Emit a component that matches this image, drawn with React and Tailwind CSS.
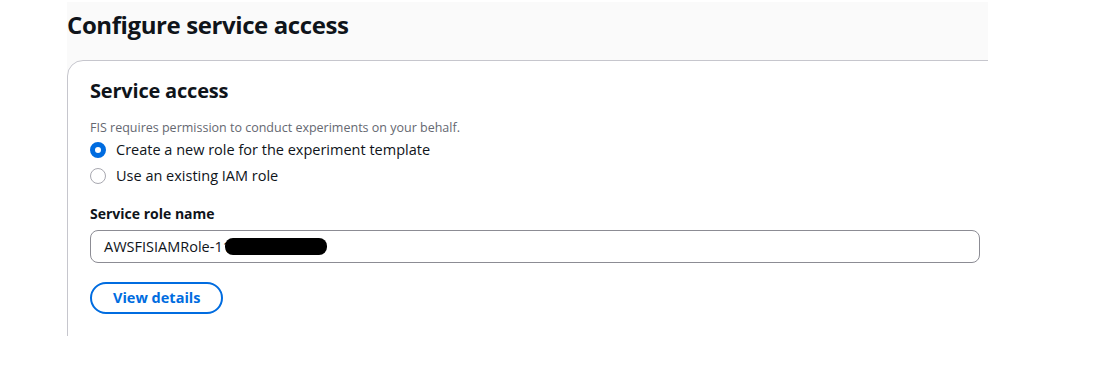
export default function App() {
  return (
    <div className="w-[1105px] h-[370px] bg-white" style={{ fontFamily: '"Open Sans", "Noto Sans", sans-serif' }}>
      <div className="pl-[67px] pt-[2px]">
        <div className="w-[921px] h-[334px] overflow-hidden bg-[#fafafa] flex flex-col">
          <h1 className="h-[58px] shrink-0 pt-[7px] text-[24px] leading-[32px] font-bold text-[#0f141a] tracking-[-0.4px]">
            Configure service access
          </h1>
          <div className="w-[960px] h-[320px] shrink-0 bg-white border border-[#c6c6cd] rounded-[16px] pl-[22px] pt-[16px]">
            <h2 className="text-[20px] leading-[28px] font-bold text-[#0f141a] tracking-[-0.2px]">Service access</h2>
            <p className="mt-[15px] text-[12.5px] leading-[16px] text-[#656871]">
              FIS requires permission to conduct experiments on your behalf.
            </p>
            <div className="mt-[4px] flex flex-col gap-[6px]">
              <label className="flex items-center gap-[10px] h-[20px]">
                <span className="w-[16px] h-[16px] rounded-full border-[5px] border-[#006ce0] bg-white shrink-0" />
                <span className="text-[14.5px] leading-[20px] text-[#0f141a]">Create a new role for the experiment template</span>
              </label>
              <label className="flex items-center gap-[10px] h-[20px]">
                <span className="w-[16px] h-[16px] rounded-full border-[1.5px] border-[#a8a8b0] bg-white shrink-0" />
                <span className="text-[14.5px] leading-[20px] text-[#0f141a]">Use an existing IAM role</span>
              </label>
            </div>
            <div className="mt-[18px] text-[14px] leading-[20px] font-bold text-[#0f141a]">Service role name</div>
            <div className="mt-[6px] w-[890px] h-[33px] border border-[#8c8c94] rounded-[8px] flex items-center pl-[13px] text-[14.5px] text-[#0f141a]">
              <span>AWSFISIAMRole-11</span>
              <span className="ml-[-6px] w-[102px] h-[17px] bg-black rounded-[8px]" />
            </div>
            <button className="mt-[19px] h-[32px] px-[21px] rounded-full border-2 border-[#006ce0] text-[#006ce0] text-[14.5px] font-bold leading-[20px]">
              View details
            </button>
          </div>
        </div>
      </div>
    </div>
  );
}
